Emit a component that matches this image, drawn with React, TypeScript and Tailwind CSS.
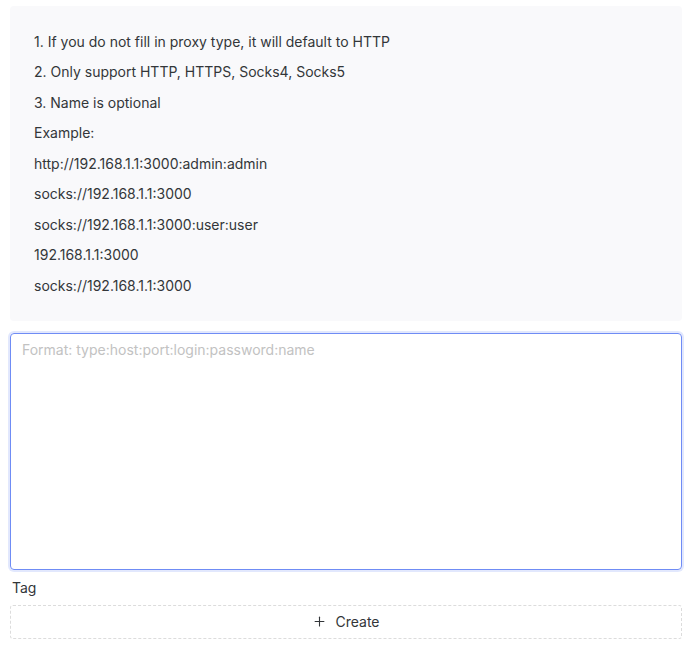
import React from 'react';
import { Plus } from 'lucide-react';

const lines = [
  '1. If you do not fill in proxy type, it will default to HTTP',
  '2. Only support HTTP, HTTPS, Socks4, Socks5',
  '3. Name is optional',
  'Example:',
  'http://192.168.1.1:3000:admin:admin',
  'socks://192.168.1.1:3000',
  'socks://192.168.1.1:3000:user:user',
  '192.168.1.1:3000',
  'socks://192.168.1.1:3000',
];

const App = () => {
  return (
    <div className="w-[695px] bg-white pl-[10px] pr-[13px] pt-[6px] font-['Inter',sans-serif] text-[14px] text-[#333639]">
      {/* Help box */}
      <div className="rounded-[4px] bg-[#f9f9fb] px-6 py-5">
        {lines.map((line, i) => (
          <div key={i} className="flex h-[30.5px] items-center">
            {line}
          </div>
        ))}
      </div>

      {/* Proxy input */}
      <textarea
        className="mt-3 block h-[237px] w-full resize-none rounded-[4px] border border-[#6f8cf5] px-[11px] py-[5px] text-[14px] outline-none shadow-[0_0_0_2px_rgba(111,140,245,0.2)] placeholder:text-[#c2c2c2]"
        placeholder="Format: type:host:port:login:password:name"
      />

      <div className="mt-[7px] pl-[2px] text-[14px] leading-[22px] text-[#333639]">Tag</div>

      <button className="mt-[6px] flex h-[34px] w-full items-center justify-center gap-2 rounded-[3px] border border-dashed border-[#dcdcdc] bg-white text-[14px] text-[#333639]">
        <Plus size={15} strokeWidth={1.75} />
        <span>Create</span>
      </button>
    </div>
  );
};

export default App;
